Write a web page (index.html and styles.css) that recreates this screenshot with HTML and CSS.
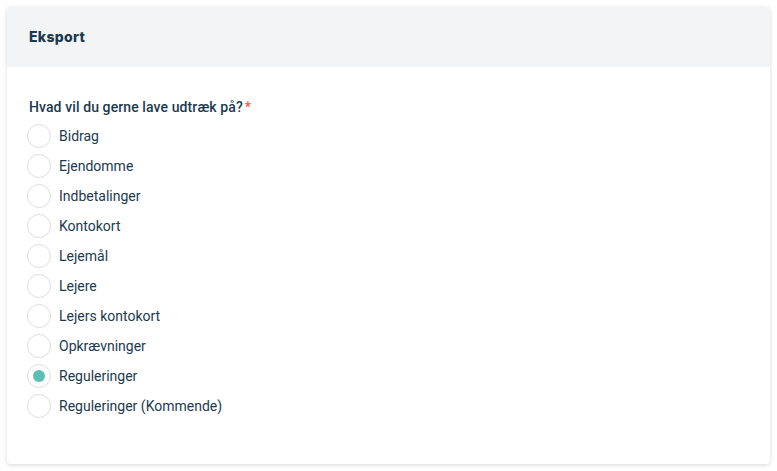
FILE: index.html
```html
<!DOCTYPE html>
<html lang="da">
<head>
    <meta charset="UTF-8">
    <meta name="viewport" content="width=device-width, initial-scale=1.0">
    <title>Eksport</title>
    <link rel="stylesheet" href="styles.css">
</head>
<body>
    <div class="card">
        <div class="card-header">Eksport</div>
        <div class="card-body">
            <div class="field-label">Hvad vil du gerne lave udtræk på?<span class="required">*</span></div>
            <div class="radio-list">
                <label class="radio"><input type="radio" name="export"><span class="dot"></span>Bidrag</label>
                <label class="radio"><input type="radio" name="export"><span class="dot"></span>Ejendomme</label>
                <label class="radio"><input type="radio" name="export"><span class="dot"></span>Indbetalinger</label>
                <label class="radio"><input type="radio" name="export"><span class="dot"></span>Kontokort</label>
                <label class="radio"><input type="radio" name="export"><span class="dot"></span>Lejemål</label>
                <label class="radio"><input type="radio" name="export"><span class="dot"></span>Lejere</label>
                <label class="radio"><input type="radio" name="export"><span class="dot"></span>Lejers kontokort</label>
                <label class="radio"><input type="radio" name="export"><span class="dot"></span>Opkrævninger</label>
                <label class="radio"><input type="radio" name="export" checked><span class="dot"></span>Reguleringer</label>
                <label class="radio"><input type="radio" name="export"><span class="dot"></span>Reguleringer (Kommende)</label>
            </div>
        </div>
    </div>
</body>
</html>
```

FILE: styles.css
```css
* {
    margin: 0px;
    padding: 0px;
    box-sizing: border-box;
}
body{
    font-family: Roboto, "Liberation Sans", sans-serif;
    background: #fff;
    padding: 7px;
    color: #1b3a4f;
}
.card{
    width: 763px;
    height: 457px;
    background: #fff;
    border-radius: 4px;
    box-shadow: 0 1px 4px rgba(0, 0, 0, 0.16);
    overflow: hidden;
}
.card-header{
    height: 60px;
    line-height: 60px;
    padding-left: 22px;
    background: #f3f4f6;
    font-family: Inter, Roboto, sans-serif;
    font-size: 14px;
    font-weight: 800;
    letter-spacing: 0.3px;
}
.card-body{
    padding: 30px 22px 40px;
}
.field-label{
    font-size: 14px;
    font-weight: 500;
    line-height: 20px;
    letter-spacing: 0.1px;
    margin-bottom: 4px;
}
.required{
    color: #ef5a45;
    margin-left: 2px;
}
.radio-list{
    display: flex;
    flex-direction: column;
    margin-left: -2px;
}
.radio{
    display: flex;
    align-items: center;
    height: 30px;
    font-size: 14px;
    cursor: pointer;
}
.radio input{
    display: none;
}
.radio .dot{
    width: 24px;
    height: 24px;
    border: 1px solid #dedede;
    border-radius: 50%;
    margin-right: 8px;
    display: flex;
    align-items: center;
    justify-content: center;
    background: #fff;
}
.radio input:checked + .dot::after{
    content: "";
    width: 12px;
    height: 12px;
    border-radius: 50%;
    background: #5cbfb4;
}
```
